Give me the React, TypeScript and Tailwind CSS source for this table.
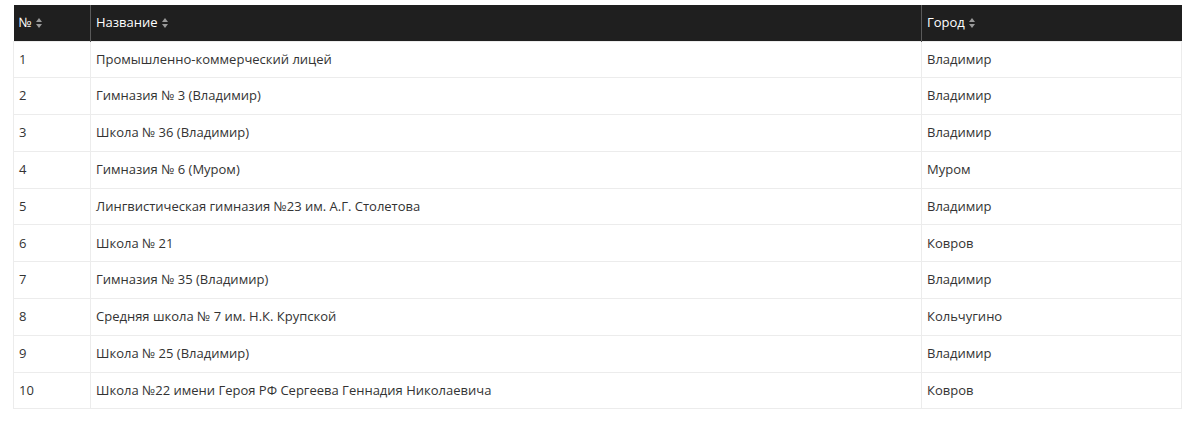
const schools: [string, string][] = [
  ["Промышленно-коммерческий лицей", "Владимир"],
  ["Гимназия № 3 (Владимир)", "Владимир"],
  ["Школа № 36 (Владимир)", "Владимир"],
  ["Гимназия № 6 (Муром)", "Муром"],
  ["Лингвистическая гимназия №23 им. А.Г. Столетова", "Владимир"],
  ["Школа № 21", "Ковров"],
  ["Гимназия № 35 (Владимир)", "Владимир"],
  ["Средняя школа № 7 им. Н.К. Крупской", "Кольчугино"],
  ["Школа № 25 (Владимир)", "Владимир"],
  ["Школа №22 имени Героя РФ Сергеева Геннадия Николаевича", "Ковров"],
];

function SortIcon() {
  return (
    <svg className="ml-[4px] inline-block h-[10px] w-[6px] align-[-1px]" viewBox="0 0 6 10" fill="#9a9a9a">
      <polygon points="3 0 6 4 0 4" />
      <polygon points="0 6 6 6 3 10" />
    </svg>
  );
}

export default function App() {
  return (
    <div className="min-h-[432px] bg-white pt-[5px] pl-[13px] pr-[18px]" style={{ fontFamily: '"Open Sans", sans-serif' }}>
      <table className="w-full border-collapse text-[13px] text-[#333]">
        <thead>
          <tr className="h-[36px] bg-[#1f1f1f] text-left text-white">
            <th className="w-[77px] border-r border-[#5a5a5a] px-[5px] font-medium">
              №<SortIcon />
            </th>
            <th className="border-r border-[#5a5a5a] px-[5px] font-medium">
              Название<SortIcon />
            </th>
            <th className="w-[260px] px-[5px] font-medium">
              Город<SortIcon />
            </th>
          </tr>
        </thead>
        <tbody>
          {schools.map(([name, city], i) => (
            <tr key={i} className="h-[36.8px] border border-[#ececec]">
              <td className="border-r border-[#ececec] px-[5px]">{i + 1}</td>
              <td className="border-r border-[#ececec] px-[5px]">{name}</td>
              <td className="px-[5px]">{city}</td>
            </tr>
          ))}
        </tbody>
      </table>
    </div>
  );
}
